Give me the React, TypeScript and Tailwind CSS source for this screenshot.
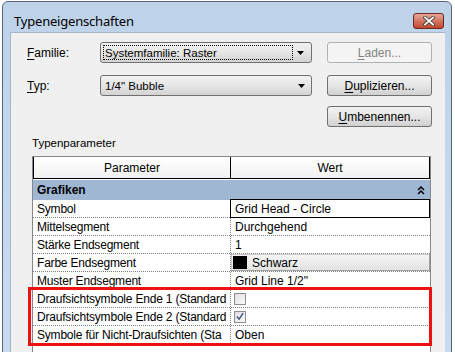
import React from "react";

const rows: { name: string; kind: "text" | "edit" | "color" | "check" | "checked"; value?: string }[] = [
  { name: "Symbol", kind: "edit", value: "Grid Head - Circle" },
  { name: "Mittelsegment", kind: "text", value: "Durchgehend" },
  { name: "Stärke Endsegment", kind: "text", value: "1" },
  { name: "Farbe Endsegment", kind: "color", value: "Schwarz" },
  { name: "Muster Endsegment", kind: "text", value: 'Grid Line 1/2"' },
  { name: "Draufsichtsymbole Ende 1 (Standard", kind: "check" },
  { name: "Draufsichtsymbole Ende 2 (Standard", kind: "checked" },
  { name: "Symbole für Nicht-Draufsichten (Sta", kind: "text", value: "Oben" },
];

const Arrow = () => (
  <svg width="7" height="4" viewBox="0 0 7 4" className="shrink-0">
    <path d="M0 0h7L3.5 4z" fill="#000" />
  </svg>
);

const CloseButton = () => (
  <div className="w-[31px] h-[16px] rounded-[3px] border border-[#6d2a20] bg-gradient-to-b from-[#e8a99c] via-[#d27561] to-[#c4452d] flex items-center justify-center">
    <svg width="14" height="10" viewBox="0 0 14 10">
      <path d="M3 1.5l8 7M11 1.5l-8 7" stroke="#3b3b3b" strokeWidth="3.4" strokeLinecap="square" />
      <path d="M3 1.5l8 7M11 1.5l-8 7" stroke="#fff" strokeWidth="1.8" strokeLinecap="square" />
    </svg>
  </div>
);

const Checkbox = ({ checked }: { checked?: boolean }) => (
  <div className="w-[12px] h-[12px] border border-[#8f8f8f] bg-gradient-to-br from-[#dcdcdc] to-[#fafafa] p-[1px]">
    <div className="w-full h-full bg-gradient-to-br from-[#e4e4e4] to-[#f7f7f7] flex items-center justify-center">
      {checked && (
        <svg width="9" height="9" viewBox="0 0 9 9">
          <path d="M1 4.5l2.5 3L8 0.8" stroke="#3c4f8c" strokeWidth="1.6" fill="none" />
        </svg>
      )}
    </div>
  </div>
);

const WinButton = ({ children, disabled }: { children: React.ReactNode; disabled?: boolean }) => (
  <div
    className={
      disabled
        ? "w-[105px] h-[21px] rounded-[3px] border border-[#adb2b5] bg-[#f4f4f4] text-[#838383] flex items-center justify-center"
        : "w-[105px] h-[21px] rounded-[3px] border border-[#707070] bg-gradient-to-b from-[#f2f2f2] via-[#e6e6e6] to-[#d0d0d0] flex items-center justify-center"
    }
  >
    {children}
  </div>
);

export default function App() {
  return (
    <div className="relative w-[455px] h-[352px] overflow-hidden bg-white pl-[2px] pt-[1px] pr-[3px] font-['Liberation_Sans',Arial,sans-serif] text-[12px] leading-[14px] text-black">
      <div className="h-[370px] border border-[#56677c] rounded-t-[6px] bg-gradient-to-b from-[#bed3ea] to-[#c9dbef] flex flex-col">
        <div className="h-[30px] shrink-0 flex items-center justify-between pl-[11px] pr-[7px] pt-[8px]">
          <span className="text-[13px] font-['Noto_Sans',sans-serif] tracking-[-0.2px]">Typeneigenschaften</span>
          <CloseButton />
        </div>
        <div className="flex-1 flex pl-[7px] pr-[6px]">
          <div className="flex-1 bg-[#f0f0f0] border-l border-t border-[#a7b6c8] flex flex-col pt-[9px]">
            <div className="flex items-center h-[21px]">
              <span className="w-[89px] pl-[16px]">
                <u className="underline-offset-2">F</u>amilie:
              </span>
              <div className="w-[212px] h-[21px] rounded-[3px] border border-[#707070] bg-gradient-to-b from-[#f2f2f2] via-[#e6e6e6] to-[#d3d3d3] flex items-center pl-[2px] pr-[3px]">
                <div className="w-[190px] h-[15px] border border-dotted border-black flex items-center pl-[1px] text-[11.5px]">
                  Systemfamilie: Raster
                </div>
                <div className="flex-1 flex justify-center">
                  <Arrow />
                </div>
              </div>
              <div className="ml-[15px]">
                <WinButton disabled>
                  <span>
                    <u className="underline-offset-2">L</u>aden...
                  </span>
                </WinButton>
              </div>
            </div>
            <div className="flex items-center h-[21px] mt-[12px]">
              <span className="w-[89px] pl-[16px]">
                <u className="underline-offset-2">T</u>yp:
              </span>
              <div className="w-[212px] h-[21px] rounded-[3px] border border-[#707070] bg-gradient-to-b from-[#f2f2f2] via-[#e6e6e6] to-[#d3d3d3] flex items-center pl-[4px] pr-[3px]">
                <div className="w-[189px] text-[11.5px]">1/4" Bubble</div>
                <div className="flex-1 flex justify-center">
                  <Arrow />
                </div>
              </div>
              <div className="ml-[15px]">
                <WinButton>
                  <span>
                    <u className="underline-offset-2">D</u>uplizieren...
                  </span>
                </WinButton>
              </div>
            </div>
            <div className="flex h-[21px] mt-[10px] pl-[316px]">
              <WinButton>
                <span>
                  <u className="underline-offset-2">U</u>mbenennen...
                </span>
              </WinButton>
            </div>
            <div className="mt-[9px] pl-[21px] text-[11.5px]">Typenparameter</div>
            <div className="mt-[6px] ml-[21px] w-[399px] flex-1 border border-[#828790] bg-white">
              <div className="flex h-[22px] border-l border-r border-b border-black bg-gradient-to-b from-white to-[#f1f1f1]">
                <div className="w-[197px] border-r border-black flex items-center justify-center">Parameter</div>
                <div className="flex-1 flex items-center justify-center">Wert</div>
              </div>
              <div className="mt-[1px] h-[20px] bg-[#a0b7d4] flex items-center justify-between pl-[4px] pr-[5px]">
                <span className="font-bold">Grafiken</span>
                <svg width="8" height="9" viewBox="0 0 8 9">
                  <path d="M1 4L4 1L7 4M1 8L4 5L7 8" stroke="#000" strokeWidth="1.5" fill="none" />
                </svg>
              </div>
              {rows.map((r) => (
                <div key={r.name} className="flex h-[18px] border-b border-dotted border-[#808080]">
                  <div className="w-[197px] pl-[4px] flex items-center whitespace-nowrap overflow-hidden tracking-[-0.2px]">
                    {r.name}
                  </div>
                  <div className="flex-1 border-l border-dotted border-[#808080] flex">
                    {r.kind === "text" && <div className="pl-[4px] flex items-center">{r.value}</div>}
                    {r.kind === "edit" && (
                      <div className="flex-1 -mt-[1px] -mb-[1px] -ml-[1px] border border-black bg-white pl-[4px] flex items-center">
                        {r.value}
                      </div>
                    )}
                    {r.kind === "color" && (
                      <div className="flex-1 border border-[#c8c8c8] border-r-[#a0a0a0] border-b-[#a0a0a0] bg-gradient-to-b from-[#f6f6f6] to-[#e2e2e2] flex items-center pl-[1px] gap-[5px]">
                        <div className="w-[14px] h-[13px] bg-black" />
                        <span>{r.value}</span>
                      </div>
                    )}
                    {(r.kind === "check" || r.kind === "checked") && (
                      <div className="pl-[3px] flex items-center">
                        <Checkbox checked={r.kind === "checked"} />
                      </div>
                    )}
                  </div>
                </div>
              ))}
            </div>
          </div>
        </div>
      </div>
      <div className="absolute left-[28px] top-[287px] w-[404px] h-[59px] border-[3px] border-[#ee1111]" />
    </div>
  );
}
